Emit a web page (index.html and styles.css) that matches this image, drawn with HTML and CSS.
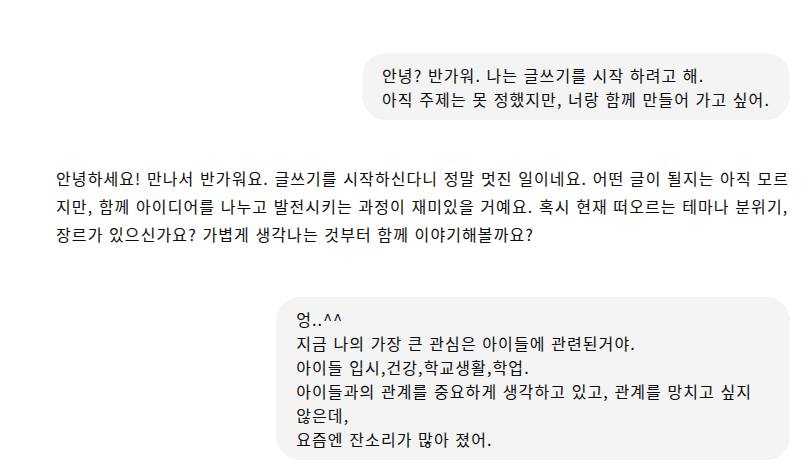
FILE: index.html
```html
<!DOCTYPE html>
<html lang="ko">
<head>
<meta charset="utf-8">
<link rel="stylesheet" href="styles.css">
</head>
<body>
<main class="thread">
  <div class="msg user">
    <div class="bubble">안녕? 반가워. 나는 글쓰기를 시작 하려고 해.<br>아직 주제는 못 정했지만, 너랑 함께 만들어 가고 싶어.</div>
  </div>
  <div class="msg assistant">
    <p>안녕하세요! 만나서 반가워요. 글쓰기를 시작하신다니 정말 멋진 일이네요. 어떤 글이 될지는 아직 모르지만, 함께 아이디어를 나누고 발전시키는 과정이 재미있을 거예요. 혹시 현재 떠오르는 테마나 분위기, 장르가 있으신가요? 가볍게 생각나는 것부터 함께 이야기해볼까요?</p>
  </div>
  <div class="msg user">
    <div class="bubble">엉..^^<br>지금 나의 가장 큰 관심은 아이들에 관련된거야.<br>아이들 입시,건강,학교생활,학업.<br>아이들과의 관계를 중요하게 생각하고 있고, 관계를 망치고 싶지 않은데,<br>요즘엔 잔소리가 많아 졌어.</div>
  </div>
</main>
</body>
</html>
```

FILE: styles.css
```css
* { box-sizing: border-box; }
html, body { margin: 0; padding: 0; background: #ffffff; }
body {
  font-family: "Noto Sans CJK KR", "Noto Sans", sans-serif;
  font-size: 16px;
  letter-spacing: 1.1px;
  color: #0d0d0d;
}
.thread {
  display: flex;
  flex-direction: column;
  padding: 53px 16px 0 56px;
}
.msg { display: flex; }
.msg.user { justify-content: flex-end; }
.bubble {
  max-width: 70%;
  background: #f4f4f4;
  border-radius: 24px;
  padding: 9.5px 20px;
  line-height: 24px;
  word-break: normal;
}
.msg.assistant { margin: 44px 0 49px; }
.msg.assistant p {
  margin: 0;
  line-height: 28px;
  word-break: break-all;
}
```
